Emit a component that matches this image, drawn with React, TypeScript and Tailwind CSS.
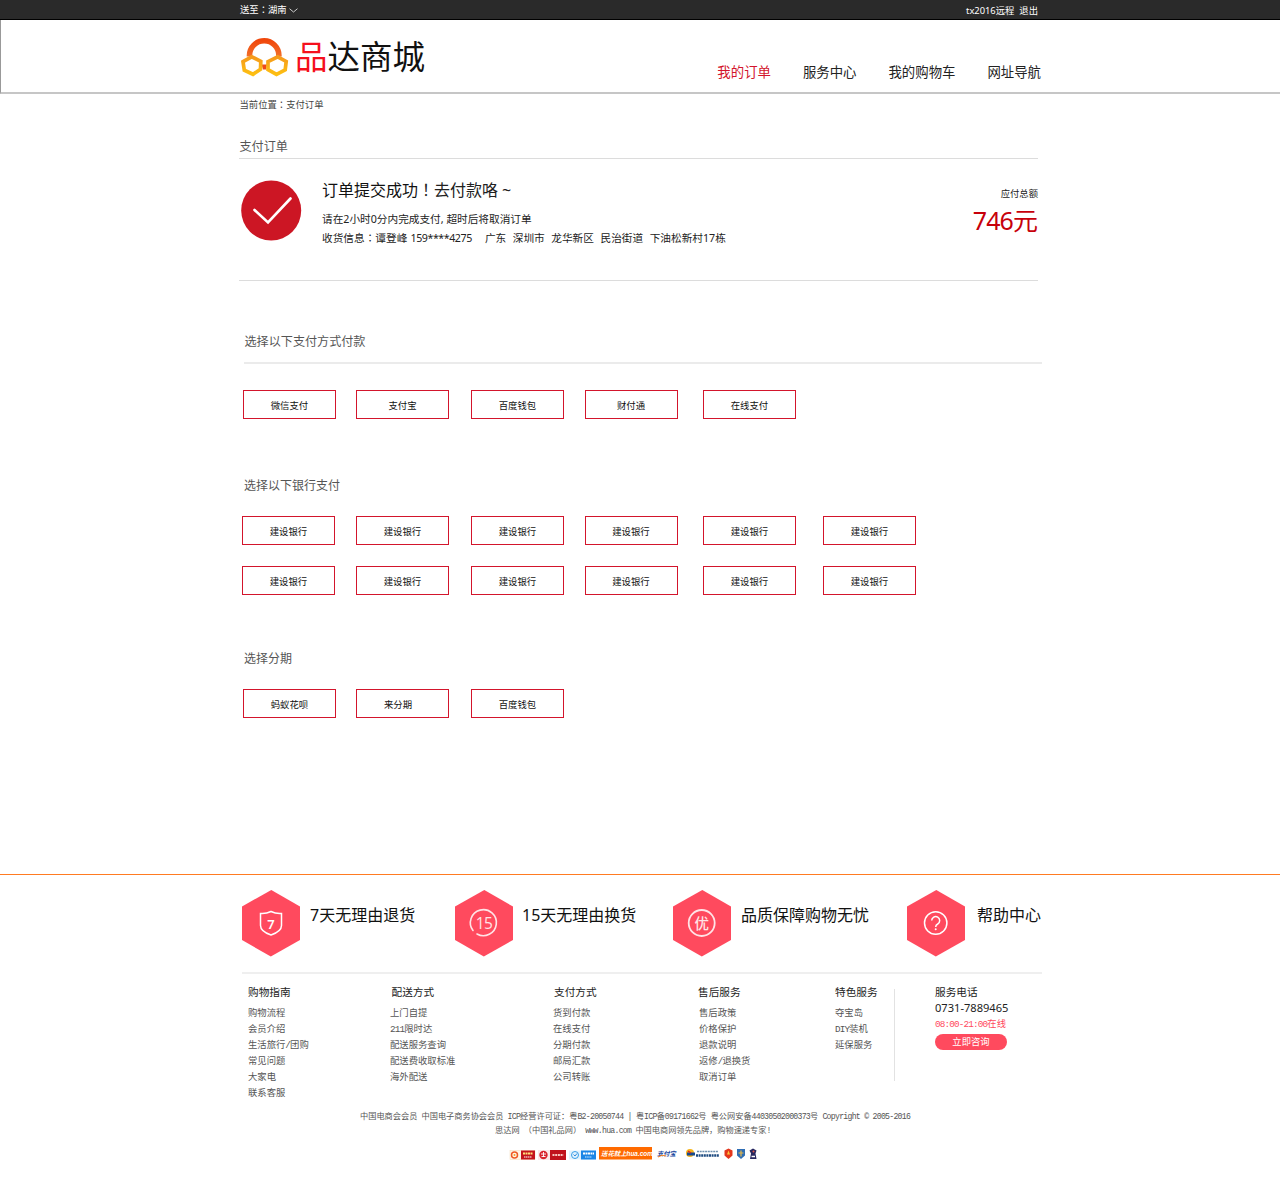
import type { ReactNode } from "react";

const payMethods = ["微信支付", "支付宝", "百度钱包", "财付通", "在线支付"];
const banks = Array.from({ length: 12 }, () => "建设银行");
const instalments = ["蚂蚁花呗", "来分期", "百度钱包"];

const linkColumns = [
  {
    title: "购物指南",
    className: "w-[142px]",
    titleClassName: "",
    links: ["购物流程", "会员介绍", "生活旅行/团购", "常见问题", "大家电", "联系客服"],
  },
  {
    title: "配送方式",
    className: "w-[163px]",
    titleClassName: "pl-[1.500px]",
    links: ["上门自提", "211限时达", "配送服务查询", "配送费收取标准", "海外配送"],
  },
  {
    title: "支付方式",
    className: "w-[146px]",
    titleClassName: "pl-px",
    links: ["货到付款", "在线支付", "分期付款", "邮局汇款", "公司转账"],
  },
  {
    title: "售后服务",
    className: "w-[136px]",
    titleClassName: "-ml-px",
    links: ["售后政策", "价格保护", "退款说明", "返修/退换货", "取消订单"],
  },
  {
    title: "特色服务",
    className: "w-[59px]",
    titleClassName: "",
    links: ["夺宝岛", "DIY装机", "延保服务"],
  },
];

// Half-width latin runs between full-width characters
function Song({ text }: { text: string }) {
  return (
    <>
      {text.split(/([\x20-\x7e©]+)/).map((part, i) =>
        i % 2 ? (
          <span
            key={i}
            className="whitespace-pre font-['Liberation_Mono',monospace] tracking-[-0.09em]"
          >
            {part}
          </span>
        ) : (
          part
        ),
      )}
    </>
  );
}

// Full-width punctuation centred in its cell
function Mark({ children }: { children: string }) {
  return (
    <span lang="zh-TW" className="font-['Noto_Sans_CJK_TC',sans-serif] leading-none">
      {children}
    </span>
  );
}

function Logo() {
  return (
    <svg width="49" height="40" viewBox="0 0 49 40" fill="none">
      <defs>
        <linearGradient id="arc" x1="0" y1="0" x2="0" y2="1">
          <stop offset="0" stopColor="#f0480c" />
          <stop offset="1" stopColor="#f2702a" />
        </linearGradient>
        <linearGradient id="hex" x1="0" y1="0" x2="0" y2="1">
          <stop offset="0" stopColor="#f59a1c" />
          <stop offset="1" stopColor="#fdbf12" />
        </linearGradient>
      </defs>
      <path d="M9.500 19.500v-1a14.700 14.700 0 0 1 29.400 0v1" stroke="url(#arc)" strokeWidth="5.600" />
      <path d="M21.500 27.500h5.500l-1 5h-3z" fill="#ee4a1a" />
      <path
        d="M3 24.700l8.700-4.900 9.100 4.500-.3 7.900-7.500 5.100-8.700-4z"
        fill="#fff"
        stroke="url(#hex)"
        strokeWidth="3.700"
      />
      <path
        d="M28 24.700l9.700-4.900 8.500 4.700-1 8.300-8.700 4.500-8.500-4.700z"
        fill="#fff"
        stroke="url(#hex)"
        strokeWidth="3.700"
      />
    </svg>
  );
}

function PayButton({ children, className = "" }: { children: ReactNode; className?: string }) {
  return (
    <button
      className={`flex h-[29px] w-[93px] items-center justify-center border border-[#d3152c] pt-[3px] text-[9.400px] leading-none text-[#111] ${className}`}
    >
      {children}
    </button>
  );
}

function ButtonGrid({ children, className = "" }: { children: ReactNode; className?: string }) {
  return (
    <div
      className={`grid grid-cols-[113px_115px_113.500px_118.500px_120px_93px] gap-y-[21px] ${className}`}
    >
      {children}
    </div>
  );
}

function Feature({
  icon,
  label,
  className,
}: {
  icon: ReactNode;
  label: string;
  className: string;
}) {
  return (
    <div className={`flex ${className}`}>
      <svg width="59" height="67" viewBox="0 0 59 67" fill="none">
        <path d="M29.300 0L58 16.500V50L28.800 66.500 0 50V16.500z" fill="#ff4a5e" />
        {icon}
      </svg>
      <span className="mt-[13px] h-6 whitespace-nowrap text-[16px] leading-6 text-[#111]">
        {label}
      </span>
    </div>
  );
}

function Badges() {
  return (
    <svg width="250" height="15" viewBox="0 0 250 15" fill="none">
      <rect x="1" y="4.500" width="25" height="9" fill="#fff6e6" stroke="#f3d9b8" strokeWidth=".5" />
      <circle cx="5.500" cy="9" r="3" stroke="#ef5b24" strokeWidth="1.500" />
      <circle cx="5.500" cy="9" r="1" fill="#f5a31c" />
      <rect x="12" y="4.500" width="14" height="9" fill="#c4141b" />
      <path d="M14 7.500h10" stroke="#ffe27a" strokeWidth="2" strokeDasharray="2 .5" />
      <path d="M15 11h8" stroke="#fff" strokeWidth="1.200" strokeDasharray="1.500 .5" />
      <rect x="29" y="4" width="28" height="10" fill="#fbe9e9" />
      <circle cx="34.500" cy="9" r="4.200" fill="#d8232c" />
      <path d="M32 8h5M32.500 10.500h4M34.500 6v5" stroke="#fff" strokeWidth=".9" />
      <rect x="41" y="4" width="16" height="10" fill="#c0121c" />
      <path d="M43.500 9h11" stroke="#f6c6c0" strokeWidth="2" strokeDasharray="2 .7" />
      <rect x="60" y="4.500" width="27" height="9" fill="#e3f2fd" />
      <circle cx="66" cy="9" r="3.500" stroke="#3a9fe8" strokeWidth="1" />
      <path d="M64.500 8.500l1.500 1.500 2-2.500" stroke="#2b8be0" />
      <rect x="72" y="4.500" width="15" height="9" fill="#1b86e6" />
      <path d="M74 7.500h11" stroke="#fff" strokeWidth="1.800" strokeDasharray="2 .5" />
      <path d="M76 11h7" stroke="#d3ecff" strokeDasharray="1.500 .7" />
      <rect x="90" y="1" width="53" height="12.500" fill="#ff6a00" />
      <text
        x="92"
        y="9.800"
        fill="#fff"
        className="font-['Liberation_Sans','Noto_Sans_CJK_SC',sans-serif] text-[6.400px] font-bold italic"
      >
        送花就上hua.com
      </text>
      <text
        x="148"
        y="10"
        fill="#17479e"
        className="font-['Noto_Sans_CJK_SC',sans-serif] text-[6.300px] font-bold italic"
      >
        支付宝
      </text>
      <path d="M149 11q4-3 8-1" stroke="#f58220" strokeWidth="1" />
      <circle cx="181" cy="7" r="4" fill="#f6b51c" />
      <path d="M178 8h8" stroke="#16498f" strokeWidth="3" />
      <path d="M179 5l3 2" stroke="#d22" strokeWidth="1.500" />
      <path d="M188 5.500h21" stroke="#6d8fae" strokeWidth="1.500" strokeDasharray="2 .7" />
      <path d="M187 9.500h23" stroke="#1c4a80" strokeWidth="2.500" strokeDasharray="2 .6" />
      <path d="M219.500 2.500l4 2v5l-4 3.500-4-3.500v-5z" fill="#e3361c" />
      <path d="M219.500 4.500l1.500 4h-3z" fill="#ffc43a" />
      <path d="M228 3h8v6.500l-4 3.500-4-3.500z" fill="#2f6eb5" />
      <path d="M229.500 7h5M232 4.500v6" stroke="#e9b949" strokeWidth="1.200" />
      <path d="M244 2.500l3.500 2-1 3 1 5.500h-6.500l1-5.500-1.500-3z" fill="#27275f" />
      <path d="M242.500 10.500h3.500" stroke="#fff" strokeWidth="1.500" />
      <circle cx="244.500" cy="5.500" r="1" fill="#e45a4a" />
    </svg>
  );
}

export default function App() {
  return (
    <div className="h-[1200px] w-[1280px] overflow-hidden bg-white font-['Noto_Sans','Noto_Sans_CJK_SC',sans-serif] text-[#333]">
      <div className="flex h-5 justify-between border-b border-black bg-[#2a2a2a] pr-[242px] pl-[240px] text-[9.33px] leading-[19px] text-white">
        <div className="flex items-center">
          <span>
            送至<Mark>：</Mark>湖南
          </span>
          <svg className="mt-px ml-[2px]" width="9" height="5" viewBox="0 0 9 5" fill="none">
            <path d="M.5.7l4 3.300 4-3.300" stroke="#ddd" strokeWidth=".9" />
          </svg>
        </div>
        <div className="flex gap-[5px] pt-px">
          <span>tx2016远程</span>
          <span>退出</span>
        </div>
      </div>

      <header className="flex h-[74px] justify-between border-b-2 border-l border-b-[#c6c6c6] border-l-[#999] pr-[239px] pl-[239px]">
        <div className="flex pt-[17px]">
          <Logo />
          <h1 className="ml-[6px] text-[32.500px] leading-[40px] font-normal text-[#111]">
            <span className="text-[#f5101c]">品</span>达商城
          </h1>
        </div>
        <nav className="flex gap-8 pt-[41px] text-[13.400px] leading-[22px] text-[#222]">
          <a className="text-[#d3152c]">我的订单</a>
          <a>服务中心</a>
          <a>我的购物车</a>
          <a>网址导航</a>
        </nav>
      </header>

      <main className="h-[780px] pr-[238px] pl-[239px]">
        <div className="h-[42px] pt-[3px] pl-[0.5px] text-[9.33px] leading-4 text-[#444]">
          当前位置<Mark>：</Mark>支付订单
        </div>
        <h2 className="mr-[4px] h-[23px] border-b border-[#dcdcdc] pl-[0.5px] text-[12.100px] leading-[22px] text-[#555]">
          支付订单
        </h2>

        <section className="mr-[4px] flex h-[122px] border-b border-[#dcdcdc] pt-[21px]">
          <svg className="ml-[2px]" width="61" height="61" viewBox="0 0 61 61" fill="none">
            <circle cx="30.200" cy="30.500" r="30" fill="#cc1624" />
            <path
              d="M13.500 30L27 42.500 49.500 18.500"
              stroke="#fff"
              strokeWidth="2.600"
              strokeLinecap="round"
            />
          </svg>
          <div className="ml-[20px] text-[10.67px] text-[#222]">
            <p className="-mt-[2px] h-[31px] text-[16px] leading-6">
              <span className="text-[#111]">订单提交成功</span>
              <Mark>！</Mark>去付款咯<span className="ml-[4px]">~</span>
            </p>
            <p className="h-[19px] leading-[20px]">请在2小时0分内完成支付, 超时后将取消订单</p>
            <p className="whitespace-pre leading-[20px] [word-spacing:0.5px]">
              收货信息<Mark>：</Mark>谭登峰{" "}
              <span className="tracking-[-0.45px]">159****4275</span>
              {"    "}广东{"  "}深圳市{"  "}龙华新区{"  "}民治街道{"  "}
              下油松新村17栋
            </p>
          </div>
          <div className="ml-auto text-right">
            <p className="mt-[6px] text-[9.33px] leading-4 text-[#222]">应付总额</p>
            <p className="mt-[1px] text-[25px] leading-[34px] text-[#c7000b]">
              <span className="tracking-[-0.9px]">746</span>元
            </p>
          </div>
        </section>

        <section className="ml-[4px]">
          <h3 className="ml-px h-[83px] border-b-2 border-[#ebebeb] pt-[51px] pl-[0.5px] text-[12.100px] leading-5 text-[#555]">
            选择以下支付方式付款
          </h3>
          <ButtonGrid className="mt-[26px]">
            {payMethods.map((name) => (
              <PayButton key={name}>{name}</PayButton>
            ))}
          </ButtonGrid>
        </section>

        <section className="mt-[57px] ml-[3px]">
          <h3 className="ml-[2px] h-[40px] text-[12px] leading-5 text-[#555]">选择以下银行支付</h3>
          <div className="flex">
            <div className="grid w-[114px] gap-y-[21px]">
              <PayButton>建设银行</PayButton>
              <PayButton>建设银行</PayButton>
            </div>
            <div className="grid grid-cols-[115px_113.500px_118.500px_120px_93px] gap-y-[21px]">
              {banks.slice(2).map((name, i) => (
                <PayButton key={i}>{name}</PayButton>
              ))}
            </div>
          </div>
        </section>

        <section className="mt-[54px] ml-[4px]">
          <h3 className="ml-px h-[40px] text-[12px] leading-5 text-[#555]">选择分期</h3>
          <ButtonGrid>
            {instalments.map((name) => (
              <PayButton key={name} className={name === "来分期" ? "pr-[9px]" : ""}>
                {name}
              </PayButton>
            ))}
          </ButtonGrid>
        </section>
      </main>

      <footer className="border-t border-[#ff7b22] pr-[238px] pl-[242px]">
        <div className="flex h-[99px] border-b-2 border-[#efefef] pt-[15px]">
          <Feature
            className="w-[213px] gap-[9px]"
            label="7天无理由退货"
            icon={
              <>
                <path
                  d="M29 21.500q5 2.500 10.500 2v12q0 6-10.500 9.500-10.500-3.500-10.500-9.500v-12q5.500.5 10.500-2z"
                  stroke="#fff"
                  strokeWidth="1.500"
                />
                <text
                  x="29"
                  y="38.500"
                  textAnchor="middle"
                  fill="#fff"
                  className="font-['Noto_Sans',sans-serif] text-[13px] font-semibold"
                >
                  7
                </text>
              </>
            }
          />
          <Feature
            className="w-[218px] gap-[8px]"
            label="15天无理由换货"
            icon={
              <>
                <path
                  d="M18 40.500A13 13 0 1 1 22 44"
                  stroke="#ffe3e6"
                  strokeWidth="1.600"
                  strokeLinecap="round"
                />
                <text
                  x="29"
                  y="38.800"
                  textAnchor="middle"
                  fill="#ffe3e6"
                  className="font-['Open_Sans','Noto_Sans',sans-serif] text-[15.500px] font-medium tracking-[-0.5px]"
                >
                  15
                </text>
              </>
            }
          />
          <Feature
            className="w-[234px] gap-[9px]"
            label="品质保障购物无忧"
            icon={
              <>
                <circle cx="28.700" cy="33" r="13" stroke="#ffe3e6" strokeWidth="1.800" />
                <text
                  x="28.700"
                  y="38.500"
                  textAnchor="middle"
                  fill="#ffe3e6"
                  className="font-['Noto_Sans_CJK_SC',sans-serif] text-[14.500px] font-medium"
                >
                  优
                </text>
              </>
            }
          />
          <Feature
            className="gap-[11px]"
            label="帮助中心"
            icon={
              <>
                <circle cx="28.700" cy="33" r="11.200" stroke="#fff" strokeWidth="1.500" />
                <path
                  d="M24.700 30.500a4 4 0 1 1 6 3.500q-2 1-2 3"
                  stroke="#fff"
                  strokeWidth="1.500"
                />
                <circle cx="28.700" cy="39.300" r="1" fill="#fff" />
              </>
            }
          />
        </div>

        <div className="flex h-[135px] pt-[8px] pl-[6px]">
          {linkColumns.map((col) => (
            <div key={col.title} className={col.className}>
              <h4
                className={`h-[22.500px] text-[10.67px] leading-5 whitespace-nowrap text-[#222] ${col.titleClassName}`}
              >
                {col.title}
              </h4>
              <ul className="text-[9.33px] leading-4 whitespace-nowrap text-[#555]">
                {col.links.map((link) => (
                  <li key={link} className="h-4">
                    <Song text={link} />
                  </li>
                ))}
              </ul>
            </div>
          ))}
          <div className="mt-[7px] h-[92px] border-l border-[#e2e2e2] pl-[40px]">
            <div className="-mt-[7px] text-[10.67px] text-[#222]">
              <p className="h-[18px] leading-5">服务电话</p>
              <p className="h-[16px] text-[11.100px] leading-4">0731-7889465</p>
              <p className="h-[18px] text-[9.33px] leading-4 text-[#ff4a5e]">
                <Song text="08:00-21:00在线" />
              </p>
              <button className="block h-[16px] w-[72px] rounded-full bg-[#ff4a5e] text-[9.33px] leading-[16px] text-white">
                立即咨询
              </button>
            </div>
          </div>
        </div>

        <div className="pl-[118px] text-[8.200px] leading-[14px] whitespace-nowrap text-[#555]">
          <p className="h-[14px]">
            <Song text="中国电商会会员 中国电子商务协会会员 ICP经营许可证：粤B2-20050744 | 粤ICP备09171662号 粤公网安备44030502000373号 Copyright © 2005-2016" />
          </p>
          <p className="pl-[135px]">
            <Song text="思达网 （中国礼品网） www.hua.com 中国电商网领先品牌，购物速递专家!" />
          </p>
        </div>
        <div className="mt-[8px] pl-[267px]">
          <Badges />
        </div>
      </footer>
    </div>
  );
}
